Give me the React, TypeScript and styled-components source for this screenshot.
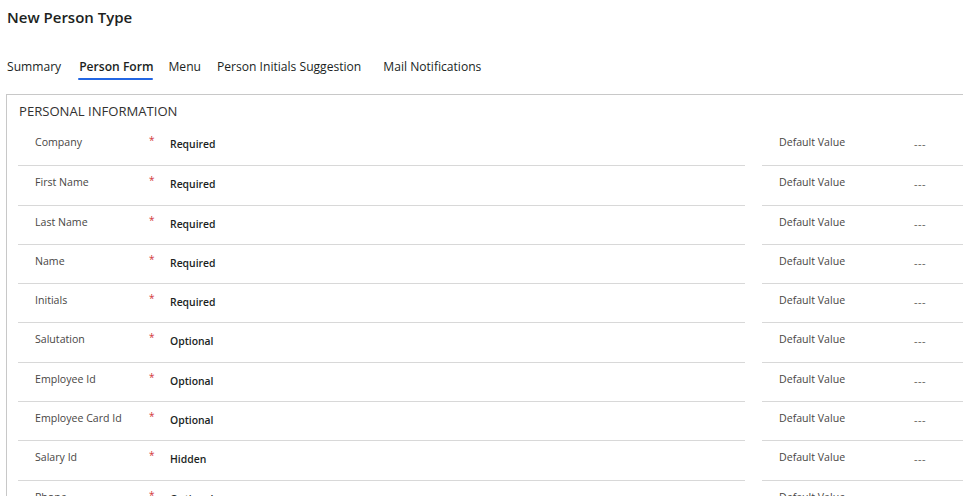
import * as React from 'react';
import styled, { createGlobalStyle } from 'styled-components';

const GlobalStyle = createGlobalStyle`
    html, body {
        margin: 0;
        padding: 0;
        background: #ffffff;
        overflow: hidden;
    }
    body {
        font-family: "Open Sans", "Noto Sans", "Liberation Sans", sans-serif;
        color: #201f1e;
    }
`;

const Page = styled.div`
    width: 963px;
    height: 496px;
    overflow: hidden;
    padding: 7px 0 0 0;
    box-sizing: border-box;
`;

const Title = styled.h1`
    margin: 0 0 0 7px;
    font-size: 15px;
    font-weight: 600;
    line-height: 20px;
    color: #201f1e;
`;

const TabBar = styled.ul`
    list-style: none;
    margin: 30px 0 0 7px;
    padding: 0;
    display: flex;
    height: 37px;
`;

const TabItem = styled.li<{ $active?: boolean; $gap: number }>`
    margin-right: ${p => p.$gap}px;
    font-size: 12.1px;
    font-weight: ${p => (p.$active ? 600 : 400)};
    line-height: 20px;
    color: #201f1e;
    position: relative;
    white-space: nowrap;
    &::after {
        content: '';
        display: ${p => (p.$active ? 'block' : 'none')};
        position: absolute;
        left: -1px;
        right: 0;
        top: 21px;
        height: 2px;
        background: #2266e3;
        border-radius: 1px;
    }
`;

const Panel = styled.div`
    margin: 0 0 0 6px;
    border-top: 1px solid #c8c8c8;
    border-left: 1px solid #c8c8c8;
    height: 420px;
`;

const SectionTitle = styled.div`
    padding: 6px 0 0 12px;
    font-size: 13.1px;
    line-height: 20px;
    color: #323130;
    height: 25px;
`;

const Rows = styled.div`
    display: flex;
    flex-direction: column;
`;

const Row = styled.div`
    display: flex;
    height: 39.3px;
`;

const LeftCell = styled.div<{ $first?: boolean }>`
    margin-left: 11px;
    width: 727px;
    border-top: ${p => (p.$first ? 'none' : '1px solid #d8d8d8')};
    display: flex;
    box-sizing: border-box;
`;

const RightCell = styled.div<{ $first?: boolean }>`
    margin-left: 17px;
    flex: 1;
    border-top: ${p => (p.$first ? 'none' : '1px solid #d8d8d8')};
    display: flex;
    box-sizing: border-box;
`;

const Label = styled.div<{ $width: number }>`
    width: ${p => p.$width}px;
    padding-left: 17px;
    padding-top: 8px;
    font-size: 10.6px;
    line-height: 16px;
    color: #484644;
    white-space: nowrap;
`;

const Star = styled.div`
    width: 21px;
    padding-top: 8px;
    font-size: 10px;
    line-height: 12px;
    color: #d13438;
`;

const Value = styled.div`
    padding-top: 10px;
    font-size: 10.4px;
    font-weight: 600;
    line-height: 16px;
    color: #201f1e;
`;

const Dash = styled.div`
    padding-top: 10px;
    font-size: 11px;
    line-height: 16px;
    color: #605e5c;
    letter-spacing: 0.5px;
`;

const tabs = [
    { name: 'Summary', gap: 18 },
    { name: 'Person Form', gap: 15, active: true },
    { name: 'Menu', gap: 16 },
    { name: 'Person Initials Suggestion', gap: 22 },
    { name: 'Mail Notifications', gap: 0 }
];

const fields: [string, string][] = [
    ['Company', 'Required'],
    ['First Name', 'Required'],
    ['Last Name', 'Required'],
    ['Name', 'Required'],
    ['Initials', 'Required'],
    ['Salutation', 'Optional'],
    ['Employee Id', 'Optional'],
    ['Employee Card Id', 'Optional'],
    ['Salary Id', 'Hidden'],
    ['Phone', 'Optional']
];

export default function App() {
    return (
        <Page>
            <GlobalStyle />
            <Title>New Person Type</Title>
            <TabBar>
                {tabs.map(tab => (
                    <TabItem key={tab.name} $active={tab.active} $gap={tab.gap}>
                        {tab.name}
                    </TabItem>
                ))}
            </TabBar>
            <Panel>
                <SectionTitle>PERSONAL INFORMATION</SectionTitle>
                <Rows>
                    {fields.map(([label, value], index) => (
                        <Row key={label}>
                            <LeftCell $first={index === 0}>
                                <Label $width={114}>{label}</Label>
                                <Star>*</Star>
                                <Value>{value}</Value>
                            </LeftCell>
                            <RightCell $first={index === 0}>
                                <Label $width={135}>Default Value</Label>
                                <Dash>---</Dash>
                            </RightCell>
                        </Row>
                    ))}
                </Rows>
            </Panel>
        </Page>
    );
}
